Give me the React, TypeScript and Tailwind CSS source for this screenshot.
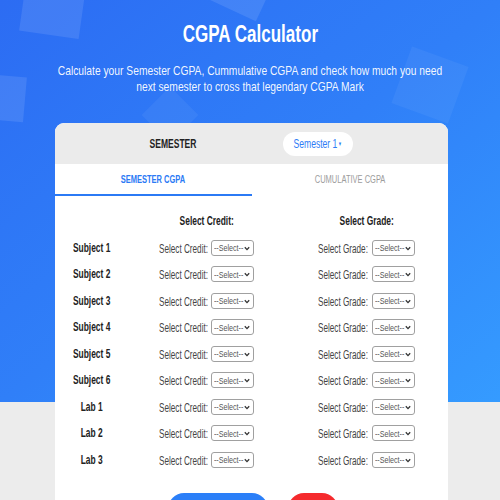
import React from 'react'

const rows = ['Subject 1', 'Subject 2', 'Subject 3', 'Subject 4', 'Subject 5', 'Subject 6', 'Lab 1', 'Lab 2', 'Lab 3']

// the screenshot's type is narrow, so text is squeezed across
function N({ children, className = '' }: { children: React.ReactNode; className?: string }) {
  return <span className={'inline-block whitespace-nowrap ' + className}>{children}</span>
}

function FakeSelect() {
  return (
    <div className="relative flex h-[16px] w-[43px] shrink-0 items-center overflow-hidden rounded-[3px] border border-[#a0a0a0] bg-white pl-[2px]">
      <N className="origin-left scale-x-75 text-[9.5px] leading-none text-[#555]">--Select--</N>
      <svg className="absolute right-[3px] top-[5px]" width="6" height="5" viewBox="0 0 6 5">
        <path d="M0.8 1.2 L3 3.6 L5.2 1.2" fill="none" stroke="#333" strokeWidth="1.3" />
      </svg>
    </div>
  )
}

function Field({ label, width }: { label: string; width: string }) {
  return (
    <div className="flex items-center justify-center gap-[3px]">
      <div className={width}>
        <N className="origin-left scale-x-[0.68] text-[12px] text-[#444]">{label}</N>
      </div>
      <FakeSelect />
    </div>
  )
}

export default function App() {
  return (
    <div className="relative h-[500px] w-[500px] overflow-hidden bg-[#ececec]" style={{ fontFamily: '"Liberation Sans", Arial, sans-serif' }}>
      {/* blue hero */}
      <div className="absolute left-0 top-0 h-[402px] w-full overflow-hidden bg-gradient-to-br from-[#2c6cf3] via-[#307ff8] to-[#359bff]">
        <div className="absolute left-[22px] top-[-10px] h-[45px] w-[60px] rotate-[8deg] bg-white/10" />
        <div className="absolute left-[205px] top-[-20px] h-[30px] w-[60px] rotate-[25deg] bg-white/10" />
        <div className="absolute left-[-30px] top-[75px] h-[45px] w-[55px] rotate-[5deg] bg-white/10" />
        <div className="absolute left-[400px] top-[55px] h-[60px] w-[60px] rotate-[20deg] bg-white/5" />
        <div className="absolute left-[150px] top-[95px] h-[40px] w-[40px] rotate-45 bg-white/5" />
      </div>

      <div className="relative flex flex-col items-center">
        <h1 className="mt-[20px] text-[24px] font-bold leading-[28px] text-white">
          <N className="scale-x-[0.71]">CGPA Calculator</N>
        </h1>
        <p className="mt-[15px] w-[500px] shrink-0 scale-x-[0.79] text-center text-[13px] leading-[16px] text-white/95">
          Calculate your Semester CGPA, Cummulative CGPA and check how much you need next semester to cross that legendary CGPA Mark
        </p>

        <div className="ml-[3px] mt-[28px] w-[393px] overflow-hidden rounded-t-[9px] bg-white">
          <div className="flex h-[41px] items-center bg-[#ebebeb]">
            <div className="w-[228px] pl-[8px] text-center text-[12px] font-bold text-[#222]">
              <N className="scale-x-[0.71]">SEMESTER</N>
            </div>
            <div className="flex h-[24px] w-[70px] items-center justify-center rounded-full bg-white text-[13px] text-[#2d7cf6]">
              <N className="scale-x-[0.66]">
                Semester 1<span className="ml-[1px] align-middle text-[6px]">▼</span>
              </N>
            </div>
          </div>

          <div className="grid h-[32px] grid-cols-2">
            <div className="flex items-center justify-center border-b-2 border-[#2b7af5] text-[10px] font-bold text-[#2b7af5]">
              <N className="scale-x-75">SEMESTER CGPA</N>
            </div>
            <div className="flex items-center justify-center pb-[2px] text-[10px] text-[#9c9c9c]">
              <N className="scale-x-75">CUMULATIVE CGPA</N>
            </div>
          </div>

          <div className="pt-[12px]">
            <div className="grid h-[26.5px] grid-cols-[73px_157px_163px] items-center text-center text-[12px] font-bold text-[#222]">
              <div />
              <div>
                <N className="scale-x-[0.7]">Select Credit:</N>
              </div>
              <div>
                <N className="scale-x-[0.7]">Select Grade:</N>
              </div>
            </div>
            {rows.map((r) => (
              <div key={r} className="grid h-[26.5px] grid-cols-[73px_157px_163px] items-center text-center">
                <div className="text-[12px] font-bold text-[#222]">
                  <N className="scale-x-[0.7]">{r}</N>
                </div>
                <Field label="Select Credit:" width="w-[49px]" />
                <Field label="Select Grade:" width="w-[51px]" />
              </div>
            ))}
          </div>

          <div className="mt-[20px] flex justify-center gap-[20px] pl-[2px]">
            <button className="h-[32px] w-[100px] rounded-full bg-[#2b7ff8]" />
            <button className="h-[32px] w-[50px] rounded-full bg-[#f52a2d]" />
          </div>
        </div>
      </div>
    </div>
  )
}
